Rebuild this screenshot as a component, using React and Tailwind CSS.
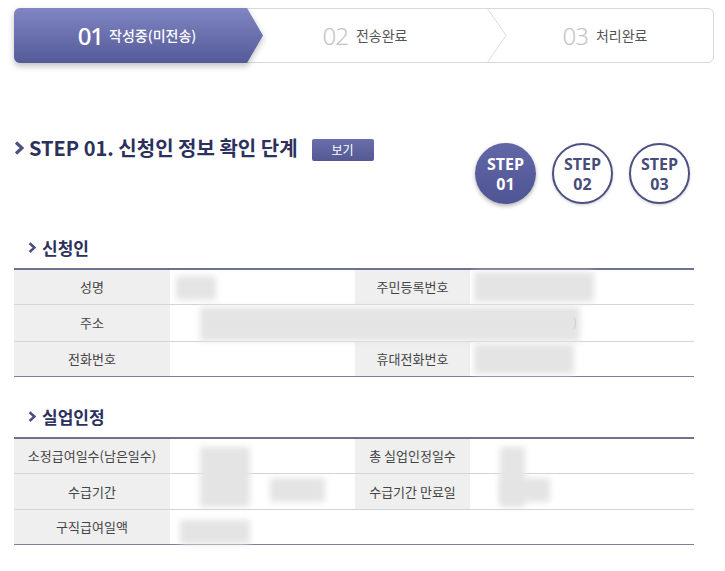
import React from "react";

const Chevron = ({ size = 10, className = "" }) => (
  <svg width={size} height={size * 1.4} viewBox="0 0 10 14" className={className}>
    <polyline points="2,1.5 8,7 2,12.5" fill="none" stroke="#4b5082" strokeWidth="3.2" strokeLinejoin="miter" />
  </svg>
);

const Blur = ({ className }) => <div className={"absolute bg-[#e4e4e4] blur-[3px] " + className} />;

export default function App() {
  const label = "bg-[#efefef] flex items-center justify-center text-[13px] text-[#444]";
  return (
    <div className="w-[725px] h-[571px] bg-white overflow-hidden font-['Noto_Sans_CJK_KR',sans-serif]">
      {/* progress bar */}
      <div className="ml-[14px] mt-[8px] w-[700px] h-[55px] relative">
        <div className="absolute inset-0 border border-[#d9d9d9] rounded-[6px] bg-white" />
        <div className="absolute left-0 top-0 h-full w-[250px] drop-shadow-[0_3px_3px_rgba(0,0,0,0.25)]">
          <div className="h-full w-full rounded-l-[6px] bg-gradient-to-b from-[#8086c2] to-[#555a98] [clip-path:polygon(0_0,233px_0,249px_50%,233px_100%,0_100%)]" />
        </div>
        <svg className="absolute left-[472px] top-0" width="22" height="55" viewBox="0 0 22 55">
          <polyline points="1,0 20,27.5 1,55" fill="none" stroke="#dcdcdc" strokeWidth="1" />
        </svg>
        <div className="absolute inset-0 flex items-center">
          <div className="w-[248px] flex items-center justify-center gap-[6px] pr-[2px]">
            <span className="text-[24px] leading-none text-white font-medium tracking-[-1px] font-['Noto_Sans',sans-serif]">01</span>
            <span className="text-[14px] text-white font-medium">작성중(미전송)</span>
          </div>
          <div className="w-[224px] flex items-center justify-center gap-[8px] pr-[18px]">
            <span className="text-[24px] leading-none text-[#c4c4c4] font-light tracking-[-1px] font-['Noto_Sans',sans-serif]">02</span>
            <span className="text-[14px] text-[#555]">전송완료</span>
          </div>
          <div className="flex-1 flex items-center justify-center gap-[8px] pl-[10px]">
            <span className="text-[24px] leading-none text-[#c4c4c4] font-light tracking-[-1px] font-['Noto_Sans',sans-serif]">03</span>
            <span className="text-[14px] text-[#555]">처리완료</span>
          </div>
        </div>
      </div>

      {/* heading row */}
      <div className="flex mt-[72px] ml-[14px] w-[676px] h-[70px]">
        <div className="flex items-start">
          <div className="flex items-center h-[26px]">
            <Chevron size={10} />
            <span className="ml-[5px] text-[20px] font-bold text-[#2c305c] leading-[26px]">STEP 01. 신청인 정보 확인 단계</span>
          </div>
          <div className="ml-[14px] mt-[4px] w-[62px] h-[22px] rounded-[2px] bg-gradient-to-b from-[#6a6fab] to-[#545994] flex items-center justify-center text-[12px] text-white">보기</div>
        </div>
        <div className="ml-auto mt-[8px] flex gap-[16px] font-['Open_Sans',sans-serif] font-bold text-[16px] leading-[20px]">
          <div className="w-[61px] h-[61px] rounded-full bg-gradient-to-b from-[#6267a8] to-[#4f5493] shadow-[0_2px_4px_rgba(0,0,0,0.3)] flex flex-col items-center justify-center text-white">
            <span>STEP</span><span>01</span>
          </div>
          <div className="w-[61px] h-[61px] rounded-full border-2 border-[#4c5182] bg-white shadow-[0_1px_3px_rgba(0,0,0,0.2)] flex flex-col items-center justify-center text-[#474c78]">
            <span>STEP</span><span>02</span>
          </div>
          <div className="w-[61px] h-[61px] rounded-full border-2 border-[#4c5182] bg-white shadow-[0_1px_3px_rgba(0,0,0,0.2)] flex flex-col items-center justify-center text-[#474c78]">
            <span>STEP</span><span>03</span>
          </div>
        </div>
      </div>

      {/* section 1 */}
      <div className="ml-[28px] mt-[31px] flex items-center h-[24px]">
        <Chevron size={8} />
        <span className="ml-[6px] text-[17px] font-bold text-[#2c305c]">신청인</span>
      </div>
      <div className="ml-[14px] mt-[8px] w-[680px] border-t-2 border-[#6e7290] border-b border-b-[#7d8096] relative">
        <div className="grid grid-cols-[156px_185px_115px_1fr] grid-rows-[35px_37px_34px]">
          <div className={label + " border-b border-[#d4d4d4]"}>성명</div>
          <div className="border-b border-[#d4d4d4] relative"><Blur className="left-[6px] top-[6px] w-[40px] h-[24px]" /></div>
          <div className={label + " border-b border-[#d4d4d4]"}>주민등록번호</div>
          <div className="border-b border-[#d4d4d4] relative"><Blur className="left-[4px] top-[2px] w-[120px] h-[30px]" /></div>
          <div className={label + " border-b border-[#d4d4d4]"}>주소</div>
          <div className="col-span-3 border-b border-[#d4d4d4] relative">
            <Blur className="left-[30px] top-[2px] w-[380px] h-[34px]" />
            <span className="absolute left-[403px] top-[8px] text-[12px] text-[#ccc]">)</span>
          </div>
          <div className={label}>전화번호</div>
          <div />
          <div className={label}>휴대전화번호</div>
          <div className="relative"><Blur className="left-[4px] top-[2px] w-[100px] h-[30px]" /></div>
        </div>
      </div>

      {/* section 2 */}
      <div className="ml-[28px] mt-[28px] flex items-center h-[24px]">
        <Chevron size={8} />
        <span className="ml-[6px] text-[17px] font-bold text-[#2c305c]">실업인정</span>
      </div>
      <div className="ml-[14px] mt-[8px] w-[680px] border-t-2 border-[#6e7290] border-b border-b-[#7d8096] relative">
        <div className="grid grid-cols-[156px_185px_115px_1fr] grid-rows-[35px_36px_34px]">
          <div className={label + " border-b border-[#d4d4d4]"}>소정급여일수(남은일수)</div>
          <div className="border-b border-[#d4d4d4] relative"><Blur className="left-[30px] top-[8px] w-[50px] h-[60px]" /></div>
          <div className={label + " border-b border-[#d4d4d4]"}>총 실업인정일수</div>
          <div className="border-b border-[#d4d4d4] relative"><Blur className="left-[30px] top-[8px] w-[25px] h-[60px]" /></div>
          <div className={label + " border-b border-[#d4d4d4]"}>수급기간</div>
          <div className="border-b border-[#d4d4d4] relative"><Blur className="left-[100px] top-[4px] w-[55px] h-[24px]" /></div>
          <div className={label + " border-b border-[#d4d4d4]"}>수급기간 만료일</div>
          <div className="border-b border-[#d4d4d4] relative"><Blur className="left-[30px] top-[4px] w-[50px] h-[24px]" /></div>
          <div className={label}>구직급여일액</div>
          <div className="col-span-3 relative"><Blur className="left-[10px] top-[10px] w-[70px] h-[24px]" /></div>
        </div>
      </div>
    </div>
  );
}
